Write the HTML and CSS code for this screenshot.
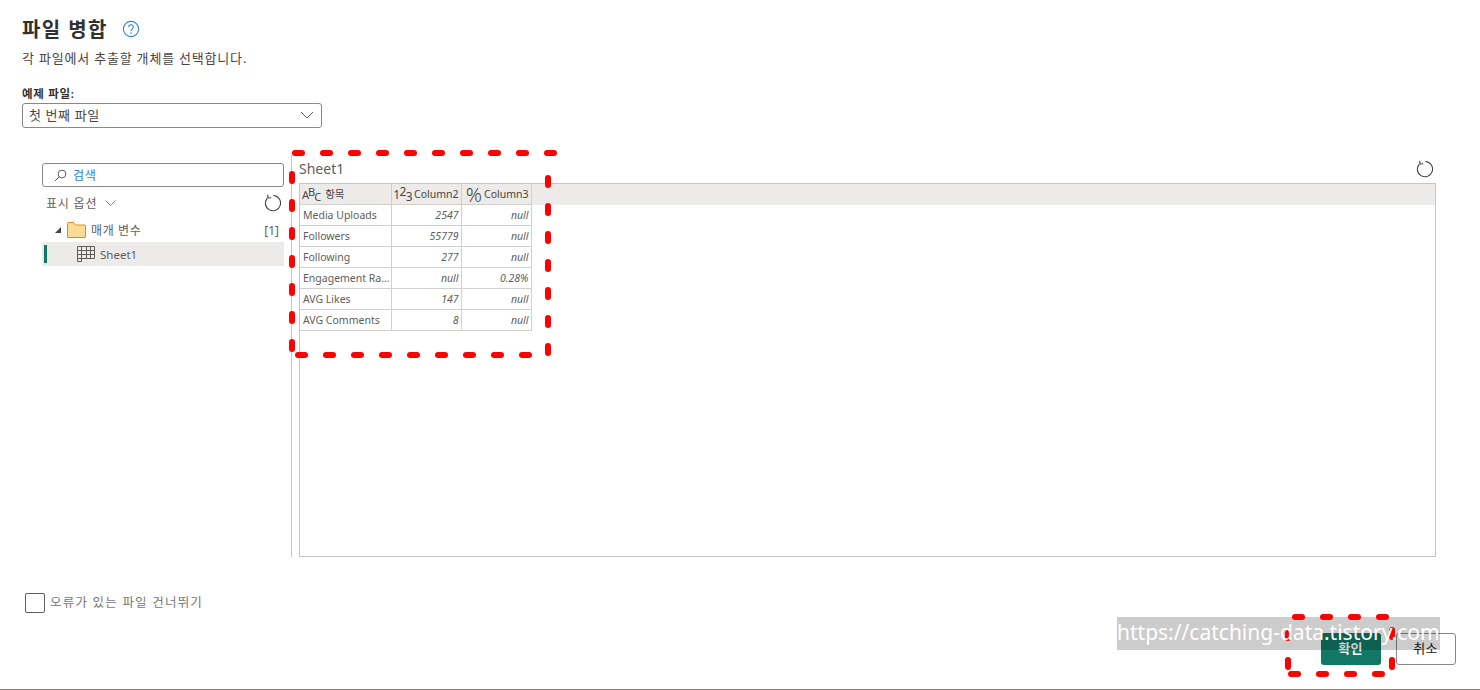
FILE: index.html
```html
<!DOCTYPE html>
<html lang="ko">
  <head>
    <meta charset="UTF-8" />
    <meta name="viewport" content="width=device-width, initial-scale=1.0" />
    <title>파일 병합</title>
    <link rel="stylesheet" href="styles.css">
  </head>

  <body>
    <div class="page">
      <div class="title-row">
        <h1>파일 병합</h1>
        <svg class="help" width="18" height="18" viewBox="0 0 18 18" fill="none">
          <circle cx="9" cy="9" r="7.6" stroke="#2b88d8" stroke-width="1.1" />
          <path d="M6.7 7a2.3 2.3 0 1 1 3.6 1.9c-.8.5-1.3 1-1.3 2" stroke="#2b88d8" stroke-width="1.1" />
          <circle cx="9" cy="13" r=".8" fill="#2b88d8" />
        </svg>
      </div>
      <p class="subtitle">각 파일에서 추출할 개체를 선택합니다.</p>

      <label class="field-label">예제 파일:</label>
      <div class="select">
        <span>첫 번째 파일</span>
        <svg width="14" height="8" viewBox="0 0 14 8" fill="none">
          <path d="M1 1l6 6 6-6" stroke="#605e5c" />
        </svg>
      </div>

      <div class="panes">
        <div class="navigator">
          <div class="search">
            <svg width="13" height="13" viewBox="0 0 13 13" fill="none">
              <circle cx="8" cy="5" r="3.9" stroke="#605e5c" />
              <path d="M5.2 7.8L1 12" stroke="#605e5c" />
            </svg>
            <span>검색</span>
          </div>
          <div class="options">
            <span>표시 옵션</span>
            <svg class="chevron" width="11" height="6" viewBox="0 0 11 6" fill="none">
              <path d="M.5.5l5 5 5-5" stroke="#8a8886" />
            </svg>
            <svg class="refresh" width="18" height="18" viewBox="0 0 18 18" fill="none">
              <path d="M10.5 1.5a7.600 7.600 0 1 1-6 2.300" stroke="#444" stroke-width="1.1" />
              <path d="M4.800.8l.2 3.200 3.200-.2" stroke="#444" stroke-width="1.1" />
            </svg>
          </div>
          <div class="tree-row first">
            <svg width="8" height="8" viewBox="0 0 8 8"><path d="M7 1v6H1z" fill="#444" /></svg>
            <svg class="folder" width="19" height="16" viewBox="0 0 19 16">
              <path d="M.5 15.5V1.5a1 1 0 0 1 1-1h5l2 2.5h9a1 1 0 0 1 1 1v11.5z" fill="#fbdc92" stroke="#e08a1e" />
            </svg>
            <span class="tree-name">매개 변수</span>
            <span class="tree-count">[1]</span>
          </div>
          <div class="tree-row selected">
            <span class="marker"></span>
            <svg width="18" height="16" viewBox="0 0 18 16" fill="none">
              <path d="M4.500 15.500H.5V.5h17v12H4.500M.5 4.500h17M.5 8.500h17M.5 12.500h4M4.500.5v15M9.500.5v12M13.500.5v12" stroke="#605e5c" />
            </svg>
            <span class="tree-name sheet">Sheet1</span>
          </div>
        </div>

        <div class="preview">
          <div class="preview-head">
            <span>Sheet1</span>
            <svg width="18" height="18" viewBox="0 0 18 18" fill="none">
              <path d="M10.500 1.500a7.600 7.600 0 1 1-6 2.300" stroke="#444" stroke-width="1.1" />
              <path d="M4.800.8l.2 3.200 3.200-.2" stroke="#444" stroke-width="1.1" />
            </svg>
          </div>
          <div class="grid-box">
            <table>
              <thead>
                <tr>
                  <th class="col-name"><span class="type-abc"><i>A</i><i class="up">B</i><i class="down">C</i></span>항목</th>
                  <th><span class="type-num">1<i class="up">2</i><i class="down">3</i></span>Column2</th>
                  <th><span class="type-pct">%</span>Column3</th>
                </tr>
              </thead>
              <tbody>
                <tr><td>Media Uploads</td><td class="val">2547</td><td class="val">null</td></tr>
                <tr><td>Followers</td><td class="val">55779</td><td class="val">null</td></tr>
                <tr><td>Following</td><td class="val">277</td><td class="val">null</td></tr>
                <tr><td>Engagement Ra...</td><td class="val">null</td><td class="val">0.28%</td></tr>
                <tr><td>AVG Likes</td><td class="val">147</td><td class="val">null</td></tr>
                <tr><td>AVG Comments</td><td class="val">8</td><td class="val">null</td></tr>
              </tbody>
            </table>
          </div>
        </div>
      </div>

      <div class="skip-row">
        <span class="checkbox"></span>
        <span class="skip-label">오류가 있는 파일 건너뛰기</span>
      </div>

      <div class="actions">
        <button class="ok">확인</button>
        <button class="cancel">취소</button>
      </div>

      <!-- marks drawn on top of the screenshot -->
      <div class="watermark-bar"></div>
      <svg class="marks" width="1480" height="690" fill="none">
        <path d="M295 153H554M548 178V360M298 355H546M292 174V350" />
        <path d="M1295 617H1392M1392 630V638M1392 660V668M1288 633V638M1288 660V668M1291 674H1392" />
      </svg>
      <div class="watermark-text">https://catching-data.tistory.com</div>
    </div>
  </body>
</html>
```

FILE: styles.css
```css
body {
  font-family: "Noto Sans", "Noto Sans CJK KR", sans-serif;
  margin: 0;
  padding: 0;
  color: #323130;
  background-color: #fff;
}

.page {
  position: relative;
  box-sizing: border-box;
  width: 1480px;
  height: 690px;
  padding: 15px 24px 0 22px;
  border-bottom: 1px solid #8a8886;
  overflow: hidden;
}

.title-row {
  display: flex;
  align-items: center;
  height: 26px;
}

h1 {
  margin: 0;
  font-size: 20px;
  font-weight: 700;
  letter-spacing: 1.4px;
}

.help {
  margin-left: 14px;
  margin-top: 2px;
}

.subtitle {
  margin: 7px 0 0;
  font-size: 13px;
  line-height: 20px;
  letter-spacing: 0.8px;
  color: #484644;
}

.field-label {
  display: block;
  margin-top: 18px;
  font-size: 11.5px;
  line-height: 16px;
  font-weight: 600;
  letter-spacing: 0.7px;
}

.select {
  box-sizing: border-box;
  display: flex;
  justify-content: space-between;
  align-items: center;
  width: 300px;
  height: 25px;
  margin-top: 1px;
  padding: 0 7px 2px 6px;
  border: 1px solid #8a8886;
  border-radius: 3px;
  font-size: 13px;
  letter-spacing: 0.6px;
  color: #484644;
}

/* main */

.panes {
  display: flex;
  height: 402px;
  margin: 27px 20px 0 20px;
}

.navigator {
  width: 242px;
  margin-top: 8px;
  margin-right: 7px;
  flex-shrink: 0;
}

.search {
  box-sizing: border-box;
  display: flex;
  align-items: center;
  gap: 6px;
  height: 24px;
  padding-left: 11px;
  border: 1px solid #8a8886;
  border-radius: 3px;
  font-size: 12px;
  letter-spacing: 0.6px;
  color: #2b7cd3;
}

.options {
  display: flex;
  align-items: center;
  height: 18px;
  margin-top: 7px;
  padding-left: 4px;
  font-size: 12px;
  letter-spacing: 0.8px;
  color: #605e5c;
}

.chevron {
  margin-left: 8px;
}

.refresh {
  margin-left: auto;
  margin-right: 3px;
}

.tree-row {
  position: relative;
  display: flex;
  align-items: center;
  height: 24px;
  padding-left: 12px;
  font-size: 12px;
  color: #605e5c;
}

.tree-row.first {
  margin-top: 6px;
}

.folder {
  margin-left: 5px;
}

.tree-name {
  margin-left: 5px;
  letter-spacing: 0.6px;
}

.tree-name.sheet {
  font-size: 11.5px;
  letter-spacing: 0;
}

.tree-count {
  margin-left: auto;
  margin-right: 5px;
}

.tree-row.selected {
  padding-left: 35px;
  background-color: #edebe9;
}

.marker {
  position: absolute;
  left: 2px;
  top: 3px;
  width: 3px;
  height: 18px;
  background-color: #117865;
}

.preview {
  flex: 1;
  display: flex;
  flex-direction: column;
  padding-left: 7px;
  border-left: 1px solid #c8c6c4;
}

.preview-head {
  display: flex;
  justify-content: space-between;
  align-items: center;
  box-sizing: border-box;
  height: 28px;
  padding: 0 3px 1px 0;
  font-size: 14px;
  color: #605e5c;
}

.grid-box {
  flex: 1;
  border: 1px solid #c8c6c4;
  background: linear-gradient(#edebe9 21px, transparent 21px);
}

table {
  table-layout: fixed;
  width: 231px;
  border-collapse: collapse;
  font-size: 10.5px;
  color: #605e5c;
}

thead tr {
  height: 20px;
}

th {
  box-sizing: border-box;
  width: 70px;
  padding: 0 2px 0 0;
  line-height: 20px;
  font-weight: 400;
  text-align: right;
  white-space: nowrap;
  border-right: 1px solid #d2d0ce;
  border-bottom: 1px solid #d2d0ce;
  color: #484644;
}

.col-name {
  width: 91px;
  text-align: left;
}

.type-abc,
.type-num,
.type-pct {
  margin-right: 2px;
  line-height: 0;
  vertical-align: middle;
}

.type-abc {
  margin-left: 2px;
  margin-right: 5px;
  font-size: 11px;
}

.type-abc i,
.type-num i {
  font-style: normal;
}

.type-abc i {
  margin-right: -1px;
}

.up {
  position: relative;
  top: -3px;
}

.down {
  position: relative;
  top: 2px;
}

.type-num {
  font-size: 12px;
  letter-spacing: -0.6px;
}

.type-pct {
  font-size: 20px;
  font-weight: 300;
}

td {
  box-sizing: border-box;
  height: 21px;
  padding: 0 2px 0 3px;
  border: 1px solid #d2d0ce;
  border-top: none;
  white-space: nowrap;
  overflow: hidden;
}

td:first-child {
  border-left: none;
}

.val {
  text-align: right;
  font-style: italic;
}

.skip-row {
  display: flex;
  align-items: center;
  gap: 5px;
  margin-top: 35px;
  margin-left: 3px;
  font-size: 12.5px;
  letter-spacing: 1.2px;
  color: #797775;
}

.skip-label {
  margin-bottom: 2px;
}

.checkbox {
  box-sizing: border-box;
  width: 20px;
  height: 20px;
  border: 1px solid #605e5c;
  border-radius: 2px;
}

.actions {
  display: flex;
  justify-content: flex-end;
  gap: 15px;
  margin-top: 20px;
}

button {
  box-sizing: border-box;
  width: 60px;
  height: 32px;
  padding: 0 1px 4px 0;
  border-radius: 3px;
  font-family: inherit;
  font-size: 13px;
  letter-spacing: 0.4px;
  cursor: pointer;
}

.ok {
  border: none;
  background-color: #117865;
  color: #fff;
  font-weight: 600;
}

.cancel {
  border: 1px solid #8a8886;
  background-color: #fff;
  color: #201f1e;
}

.watermark-bar {
  position: absolute;
  left: 1117px;
  top: 617px;
  width: 323px;
  height: 33px;
  background-color: rgba(0, 0, 0, 0.2);
}

.marks {
  position: absolute;
  left: 0;
  top: 0;
}

.marks path {
  stroke: #f00;
  stroke-width: 6;
  stroke-linecap: round;
  stroke-dasharray: 7 21;
}

.watermark-text {
  position: absolute;
  left: 1117px;
  top: 617px;
  width: 323px;
  height: 33px;
  line-height: 31px;
  font-size: 21px;
  color: #fff;
  white-space: nowrap;
}
```
